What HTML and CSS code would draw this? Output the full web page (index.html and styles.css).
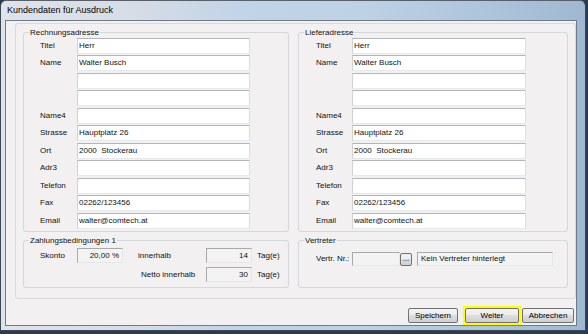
FILE: index.html
```html
<!DOCTYPE html>
<html lang="de">
<head>
<meta charset="utf-8">
<title>Kundendaten für Ausdruck</title>
<link rel="stylesheet" href="styles.css">
</head>
<body>
<div class="window">
  <div class="titlebar">Kundendaten für Ausdruck</div>
  <div class="client">
    <div class="panel">
      <fieldset class="group">
        <legend>Rechnungsadresse</legend>
        <div class="form">
          <span class="lbl">Titel</span><div class="tb">Herr</div>
          <span class="lbl">Name</span><div class="tb">Walter Busch</div>
          <span class="lbl"></span><div class="tb"></div>
          <span class="lbl"></span><div class="tb"></div>
          <span class="lbl">Name4</span><div class="tb"></div>
          <span class="lbl">Strasse</span><div class="tb">Hauptplatz 26</div>
          <span class="lbl">Ort</span><div class="tb">2000&nbsp; Stockerau</div>
          <span class="lbl">Adr3</span><div class="tb"></div>
          <span class="lbl">Telefon</span><div class="tb"></div>
          <span class="lbl">Fax</span><div class="tb">02262/123456</div>
          <span class="lbl">Email</span><div class="tb">walter@comtech.at</div>
        </div>
      </fieldset>
      <fieldset class="group">
        <legend>Lieferadresse</legend>
        <div class="form form-right">
          <span class="lbl">Titel</span><div class="tb">Herr</div>
          <span class="lbl">Name</span><div class="tb">Walter Busch</div>
          <span class="lbl"></span><div class="tb"></div>
          <span class="lbl"></span><div class="tb"></div>
          <span class="lbl">Name4</span><div class="tb"></div>
          <span class="lbl">Strasse</span><div class="tb">Hauptplatz 26</div>
          <span class="lbl">Ort</span><div class="tb">2000&nbsp; Stockerau</div>
          <span class="lbl">Adr3</span><div class="tb"></div>
          <span class="lbl">Telefon</span><div class="tb"></div>
          <span class="lbl">Fax</span><div class="tb">02262/123456</div>
          <span class="lbl">Email</span><div class="tb">walter@comtech.at</div>
        </div>
      </fieldset>
      <fieldset class="group">
        <legend>Zahlungsbedingungen 1</legend>
        <div class="zb">
          <span class="lbl">Skonto</span>
          <div class="ro num">20,00 %</div>
          <span class="lbl pl15">innerhalb</span>
          <div class="ro num">14</div>
          <span class="lbl unit">Tag(e)</span>
          <span></span>
          <span></span>
          <span class="lbl pl18">Netto innerhalb</span>
          <div class="ro num">30</div>
          <span class="lbl unit">Tag(e)</span>
        </div>
      </fieldset>
      <fieldset class="group">
        <legend>Vertreter</legend>
        <div class="vt">
          <span class="lbl">Vertr. Nr.:</span>
          <div class="ro"></div>
          <button class="btn dots">...</button>
          <div class="ro info">Kein Vertreter hinterlegt</div>
        </div>
      </fieldset>
    </div>
    <div class="buttons">
      <button class="btn b-save">Speichern</button>
      <span class="focus"><button class="btn b-next">Weiter</button></span>
      <button class="btn b-cancel">Abbrechen</button>
    </div>
  </div>
</div>
</body>
</html>
```
FILE: styles.css
```css
* { box-sizing: border-box; }

html, body {
  margin: 0;
  width: 588px;
  height: 334px;
  overflow: hidden;
}

body {
  background: #2d3b4b;
  font-family: "Liberation Sans", Arial, sans-serif;
  font-size: 8px;
  color: #111;
}

.window {
  width: 586px;
  height: 331px;
  border: 1px solid #3b4858;
  border-top-color: #5a6069;
  border-radius: 6px 6px 0 0;
  background: linear-gradient(90deg, #e0e3e8 0%, #d6dde6 22%, #c2d4e7 40%, #bed1e5 62%, #acc3da 85%, #9fb8d1 100%);
  padding: 0 8px 4px 4px;
  display: flex;
  flex-direction: column;
}

.titlebar {
  height: 19px;
  line-height: 19px;
  padding-left: 2px;
  font-size: 9px;
  color: #000;
}

.client {
  height: 306px;
  border: 1px solid #6f7b88;
  background: #f2f0f0;
  display: flex;
  flex-direction: column;
}

.panel {
  margin: 2px 0 0 9px;
  width: 561px;
  height: 276px;
  border: 1px solid #d8dadc;
  border-radius: 3px;
  padding: 4px 7px 10px;
  display: grid;
  grid-template-columns: 266px 270px;
  grid-template-rows: 204px 52px;
  column-gap: 9px;
  row-gap: 4px;
}

fieldset.group {
  margin: 0;
  padding: 0;
  min-width: 0;
  border: 1px solid #d4d8db;
  border-radius: 3px;
}

legend {
  margin-left: 5px;
  padding: 0 1px;
  font-size: 8px;
  line-height: 9px;
  color: #111;
}

.lbl {
  white-space: nowrap;
  line-height: 10px;
}

.form {
  display: grid;
  grid-template-columns: 37px 173px;
  grid-auto-rows: 17.5px;
  align-items: center;
  padding-left: 16px;
}

.form-right {
  grid-template-columns: 36px 174px;
  padding-left: 17px;
}

.tb {
  height: 16px;
  background: #fff;
  border: 1px solid;
  border-color: #b3b5b9 #dcdee2 #e6e9ed #cfd1d5;
  padding: 0 2px 0 1px;
  line-height: 14px;
  white-space: pre;
  color: #111;
}

.zb {
  display: grid;
  grid-template-columns: 37px 46px 83px 46px auto;
  grid-template-rows: 15px 15px;
  row-gap: 4px;
  align-items: center;
  padding: 3px 0 5px 16px;
}

.ro {
  height: 15px;
  background: #f4f3f3;
  border: 1px solid;
  border-color: #a9a9a9 #e6e6e6 #e6e6e6 #a9a9a9;
  line-height: 13px;
  padding: 0 3px;
  white-space: nowrap;
}

.num { text-align: right; }
.pl15 { padding-left: 15px; }
.pl18 { padding-left: 18px; }
.unit { padding-left: 5px; }

.vt {
  display: grid;
  grid-template-columns: 36px 48px 12px 141px;
  grid-template-rows: 14px;
  align-items: center;
  padding: 7px 0 0 17px;
}

.vt .ro { height: 14px; line-height: 12px; }

.vt .info { margin-left: 5px; }

.btn {
  font-family: "Liberation Sans", Arial, sans-serif;
  font-size: 8px;
  color: #000;
  height: 15px;
  padding: 0;
  border: 1px solid #707070;
  border-radius: 2px;
  background: linear-gradient(#f3f3f3 0%, #ebebeb 50%, #dddddd 50%, #cfcfcf 100%);
  line-height: 12px;
}

.dots {
  width: 12px;
  height: 13px;
  line-height: 8px;
  border-radius: 2px;
}

.buttons {
  display: flex;
  justify-content: flex-end;
  align-items: center;
  margin-top: 7px;
  padding-right: 2px;
}

.b-save { width: 50px; }
.b-next { width: 54px; }
.b-cancel { width: 52px; }

.focus {
  display: flex;
  border: 2px solid #ffff00;
  margin: 0 1px 0 5px;
}
```
